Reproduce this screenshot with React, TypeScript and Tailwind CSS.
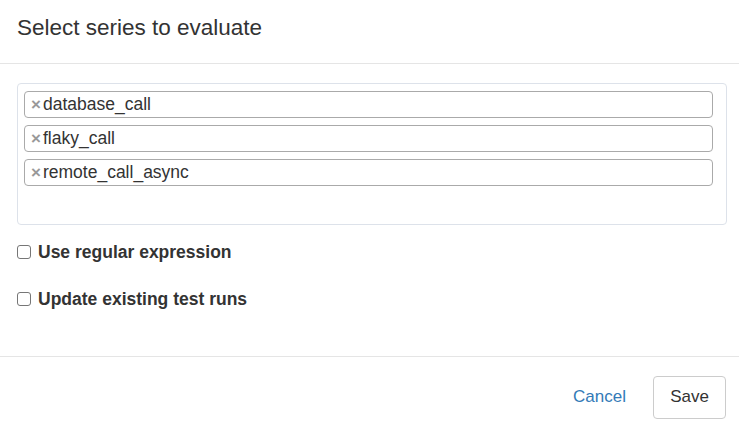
const TAGS = ['database_call', 'flaky_call', 'remote_call_async']

function Tag({ label }: { label: string }) {
  return (
    <div className="flex h-[27px] items-center rounded-[4px] border border-[#aaaaaa] pl-[6px]">
      <span className="mr-[2px] text-[17px] font-bold leading-none text-[#999999]">×</span>
      <span className="text-[17.5px] leading-none text-[#333333]">{label}</span>
    </div>
  )
}

function Check({ label }: { label: string }) {
  return (
    <label className="flex items-center gap-[7px]">
      <span className="h-[14px] w-[14px] rounded-[3px] border border-[#767676] bg-white" />
      <span className="text-[17.5px] font-bold text-[#333333]">{label}</span>
    </label>
  )
}

export default function App() {
  return (
    <div className="h-[434px] w-[739px] bg-white font-['Liberation_Sans',Arial,sans-serif] text-[#333333]">
      <div className="flex h-[64px] items-center border-b border-[#e5e5e5] px-[17px] pb-[6px]">
        <h4 className="text-[22.5px] leading-none">Select series to evaluate</h4>
      </div>

      <div className="pl-[17px] pr-[12px] pt-[19px]">
        <div className="flex h-[142px] flex-col gap-[7px] rounded-[4px] border border-[#dde2ea] pl-[6px] pr-[13px] pt-[7px]">
          {TAGS.map(t => (
            <Tag key={t} label={t} />
          ))}
        </div>
        <div className="mt-[14px] flex flex-col gap-[21px] pb-[43px]">
          <Check label="Use regular expression" />
          <Check label="Update existing test runs" />
        </div>
      </div>

      <div className="flex items-center justify-end gap-[27px] border-t border-[#e5e5e5] px-[13px] pt-[19px]">
        <span className="text-[17px] text-[#337ab7]">Cancel</span>
        <button className="h-[43px] w-[73px] rounded-[4px] border border-[#cccccc] bg-white text-[17px] text-[#333333]">
          Save
        </button>
      </div>
    </div>
  )
}
